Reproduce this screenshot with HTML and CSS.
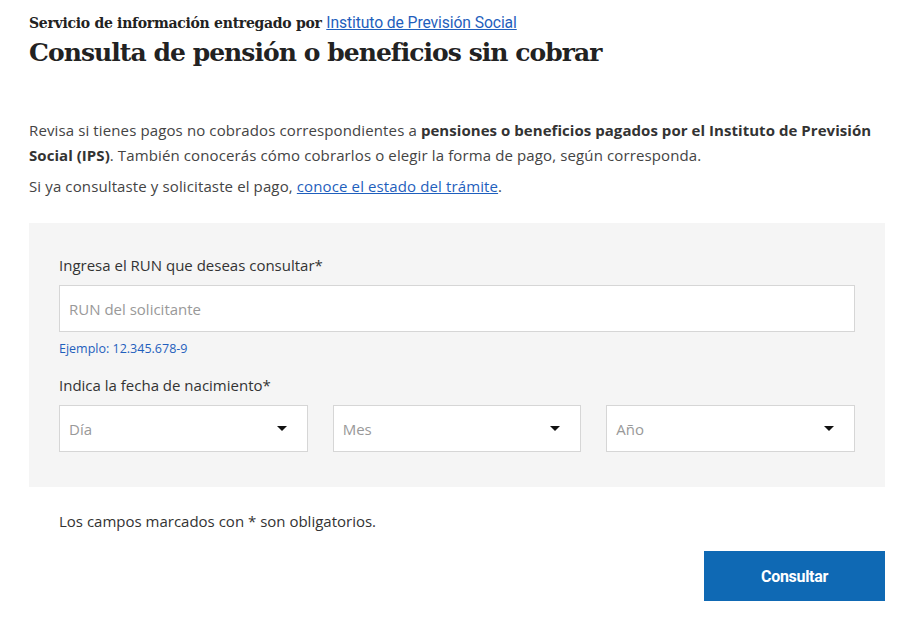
FILE: index.html
```html
<!DOCTYPE html>
<html lang="es">
<head>
<meta charset="utf-8">
<link rel="stylesheet" href="styles.css">
</head>
<body>
<main class="page">
  <header class="head">
    <p class="provider">Servicio de información entregado por <a href="#" class="provider-link">Instituto de Previsión Social</a></p>
    <h1 class="title">Consulta de pensión o beneficios sin cobrar</h1>
  </header>
  <section class="intro">
    <p class="intro-text">Revisa si tienes pagos no cobrados correspondientes a <strong>pensiones o beneficios pagados por el Instituto de Previsión</strong> <strong>Social (IPS)</strong>. También conocerás cómo cobrarlos o elegir la forma de pago, según corresponda.</p>
    <p class="intro-text">Si ya consultaste y solicitaste el pago, <a href="#" class="link">conoce el estado del trámite</a>.</p>
  </section>
  <form class="panel">
    <label class="label">Ingresa el RUN que deseas consultar*</label>
    <div class="input">RUN del solicitante</div>
    <p class="hint">Ejemplo: 12.345.678-9</p>
    <label class="label label-date">Indica la fecha de nacimiento*</label>
    <div class="selects">
      <div class="select"><span>Día</span><span class="caret"></span></div>
      <div class="select"><span>Mes</span><span class="caret"></span></div>
      <div class="select"><span>Año</span><span class="caret"></span></div>
    </div>
  </form>
  <p class="required">Los campos marcados con * son obligatorios.</p>
  <div class="actions">
    <button class="btn" type="button">Consultar</button>
  </div>
</main>
</body>
</html>
```
FILE: styles.css
```css
* { box-sizing: border-box; }
html, body { margin: 0; padding: 0; background: #fff; }
body { font-family: "Open Sans", "Noto Sans", sans-serif; color: #333; }
.page { padding: 11px 15px 0 29px; }
.head { margin: 0; }
.provider {
  margin: 0;
  font-family: "DejaVu Serif", serif;
  font-weight: bold;
  font-size: 14px;
  letter-spacing: -0.28px;
  color: #222;
  line-height: 24px;
}
.provider-link {
  font-family: Roboto, sans-serif;
  font-weight: 400;
  font-size: 15.7px;
  letter-spacing: -0.1px;
  color: #1f5fbd;
  text-decoration: underline;
}
.title {
  margin: 1px 0 0;
  font-family: "DejaVu Serif", serif;
  font-weight: bold;
  font-size: 25px;
  letter-spacing: -0.95px;
  line-height: 34px;
  color: #222;
}
.intro { margin-top: 48px; }
.intro-text {
  margin: 0 0 6px;
  font-size: 15px;
  line-height: 25px;
  letter-spacing: 0.12px;
  color: #444;
}
.intro-text strong { color: #333; font-weight: 700; letter-spacing: 0.05px; }
.link { color: #1f5fbd; text-decoration: underline; }
.panel {
  margin-top: 24px;
  background: #f5f5f5;
  padding: 30px 30px 35px;
  width: 856px;
}
.label {
  display: block;
  font-size: 15px;
  line-height: 24px;
  color: #333;
}
.input {
  margin-top: 8px;
  height: 47px;
  background: #fff;
  border: 1px solid #d6d6d6;
  padding: 0 9px;
  display: flex;
  align-items: center;
  font-size: 15px;
  color: #999;
}
.hint {
  margin: 8px 0 0;
  font-size: 12.5px;
  line-height: 18px;
  color: #1f5fbd;
}
.label-date { margin-top: 15px; }
.selects {
  margin-top: 8px;
  display: grid;
  grid-template-columns: repeat(3, 1fr);
  gap: 25px;
}
.select {
  height: 47px;
  background: #fff;
  border: 1px solid #d6d6d6;
  padding: 0 20px 0 9px;
  display: flex;
  align-items: center;
  justify-content: space-between;
  font-size: 15px;
  color: #999;
}
.caret {
  width: 0; height: 0;
  border-left: 5px solid transparent;
  border-right: 5px solid transparent;
  border-top: 5px solid #111;
}
.required {
  margin: 24px 0 0 30px;
  font-size: 15px;
  line-height: 20px;
  color: #333;
}
.actions {
  display: flex;
  justify-content: flex-end;
  margin-top: 20px;
}
.btn {
  width: 181px;
  height: 50px;
  background: #0f69b4;
  border: 0;
  color: #fff;
  font-family: Roboto, sans-serif;
  font-weight: 700;
  font-size: 16px;
  letter-spacing: -0.3px;
}
```
